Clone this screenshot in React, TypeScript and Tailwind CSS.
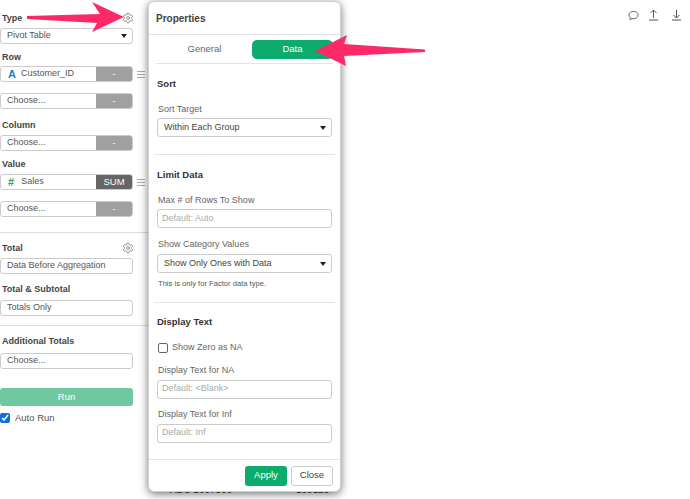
import React from "react";
import { Settings } from "lucide-react";

const Caret = () => (
  <span className="ml-auto w-0 h-0 border-x-[3.5px] border-x-transparent border-t-[4px] border-t-[#222]" />
);

const Label = ({ children, className = "" }: { children: React.ReactNode; className?: string }) => (
  <div className={`text-[9px] leading-[14px] font-bold text-[#444] pl-0.5 ${className}`}>{children}</div>
);

const Box = ({ children, caret }: { children: React.ReactNode; caret?: boolean }) => (
  <div className="h-[16px] w-[133px] flex items-center pl-[6px] pr-[5px] bg-white border border-[#ccc] rounded-[3px] text-[9px] text-[#555]">
    {children}
    {caret && <Caret />}
  </div>
);

const Hamburger = () => (
  <span className="flex flex-col gap-[2px] ml-[4px]">
    <span className="block w-[8px] h-px bg-[#aaa]" />
    <span className="block w-[8px] h-px bg-[#aaa]" />
    <span className="block w-[8px] h-px bg-[#aaa]" />
  </span>
);

const Field = ({
  icon,
  text,
  action = "-",
  dark,
  menu,
}: {
  icon?: React.ReactNode;
  text: string;
  action?: string;
  dark?: boolean;
  menu?: boolean;
}) => (
  <div className="flex items-center">
    <div className="h-[16px] w-[133px] flex bg-white border border-[#ccc] rounded-[3px] overflow-hidden text-[9px] text-[#555]">
      <div className="flex-1 flex items-center pl-[6px]">
        {icon}
        {text}
      </div>
      <div
        className={`w-[36px] flex items-center justify-center text-[9.5px] text-white ${
          dark ? "bg-[#666]" : "bg-[#a0a0a0]"
        }`}
      >
        {action}
      </div>
    </div>
    {menu && <Hamburger />}
  </div>
);

const Sidebar = () => (
  <div className="w-[148px] pt-[11px] flex flex-col">
    <div className="w-[134px] flex items-center justify-between">
      <Label>Type</Label>
      <Settings size={12} strokeWidth={1.2} className="text-[#555]" />
    </div>
    <div className="mt-[3px]">
      <Box caret>Pivot Table</Box>
    </div>
    <Label className="mt-[6px]">Row</Label>
    <div className="mt-[2px]">
      <Field
        icon={<span className="text-[#1b7ed6] font-bold text-[11px] mr-[5px] ml-px">A</span>}
        text="Customer_ID"
        menu
      />
    </div>
    <div className="mt-[11px]">
      <Field text="Choose..." />
    </div>
    <Label className="mt-[9px]">Column</Label>
    <div className="mt-[3px]">
      <Field text="Choose..." />
    </div>
    <Label className="mt-[6px]">Value</Label>
    <div className="mt-[3px]">
      <Field
        icon={<span className="text-[#3aa655] font-bold text-[11px] mr-[7px] ml-px">#</span>}
        text="Sales"
        action="SUM"
        dark
        menu
      />
    </div>
    <div className="mt-[11px]">
      <Field text="Choose..." />
    </div>
    <div className="h-px bg-[#ddd] mt-[15px]" />
    <div className="w-[134px] flex items-center justify-between mt-[8px]">
      <Label>Total</Label>
      <Settings size={12} strokeWidth={1.2} className="text-[#555]" />
    </div>
    <div className="mt-[3px]">
      <Box>Data Before Aggregation</Box>
    </div>
    <Label className="mt-[8px]">Total &amp; Subtotal</Label>
    <div className="mt-[4px]">
      <Box>Totals Only</Box>
    </div>
    <div className="h-px bg-[#ddd] mt-[9px]" />
    <Label className="mt-[8px]">Additional Totals</Label>
    <div className="mt-[5px]">
      <Box>Choose...</Box>
    </div>
    <div className="mt-[19px] h-[18px] w-[133px] bg-[#70c8a1] rounded-[3px] text-white text-[9.5px] flex items-center justify-center">
      Run
    </div>
    <div className="mt-[5px] flex items-center gap-[5px] text-[9.5px] text-[#555]">
      <input type="checkbox" defaultChecked className="w-[10px] h-[10px] m-0 accent-[#0b6fe8]" />
      Auto Run
    </div>
  </div>
);

const PanelLabel = ({ children, className = "mb-[3px]" }: { children: React.ReactNode; className?: string }) => (
  <div className={`text-[9px] leading-[13px] text-[#666] pl-px ${className}`}>{children}</div>
);

const SectionTitle = ({ children }: { children: React.ReactNode }) => (
  <div className="text-[9.5px] leading-[14px] font-bold text-[#333]">{children}</div>
);

const PanelSelect = ({ text }: { text: string }) => (
  <div className="h-[19px] flex items-center pl-[6px] pr-[5px] border border-[#ccc] rounded-[3px] text-[9px] text-[#444]">
    {text}
    <Caret />
  </div>
);

const PanelInput = ({ text }: { text: string }) => (
  <div className="h-[19px] flex items-center pl-[4px] border border-[#ccc] rounded-[3px] text-[9px] text-[#aaa]">
    {text}
  </div>
);

const Divider = () => <div className="h-px bg-[#e5e5e5] -mx-[3px]" />;

const Modal = () => (
  <div className="absolute left-[148px] top-[1px] w-[193px] h-[491px] bg-white rounded-[6px] border border-[#d0d0d0] shadow-[0_2px_8px_rgba(0,0,0,0.55)] flex flex-col">
    <div className="h-[33px] shrink-0 flex items-center pl-[7px] border-b border-[#e5e5e5] text-[10px] font-semibold text-[#444]">
      Properties
    </div>
    <div className="flex-1 px-[8px] flex flex-col">
      <div className="mt-[5px] flex items-center -mr-[1px]">
        <div className="w-[95px] text-center text-[9.5px] text-[#666]">General</div>
        <div className="w-[81px] h-[19px] rounded-[5px] bg-[#0dab6d] text-white text-[9.5px] flex items-center justify-center">
          Data
        </div>
      </div>
      <div className="h-px bg-[#e5e5e5] mt-[4px] -mx-px" />
      <div className="mt-[13px]">
        <SectionTitle>Sort</SectionTitle>
      </div>
      <div className="mt-[12px]">
        <PanelLabel className="mb-[2px]">Sort Target</PanelLabel>
        <PanelSelect text="Within Each Group" />
      </div>
      <div className="mt-[17px]">
        <Divider />
      </div>
      <div className="mt-[13px]">
        <SectionTitle>Limit Data</SectionTitle>
      </div>
      <div className="mt-[12px]">
        <PanelLabel className="mb-[2px]">Max # of Rows To Show</PanelLabel>
        <PanelInput text="Default: Auto" />
      </div>
      <div className="mt-[10px]">
        <PanelLabel>Show Category Values</PanelLabel>
        <PanelSelect text="Show Only Ones with Data" />
      </div>
      <div className="mt-[6px] text-[7.6px] leading-[10px] text-[#555] pl-px">This is only for Factor data type.</div>
      <div className="mt-[13px]">
        <Divider />
      </div>
      <div className="mt-[12px]">
        <SectionTitle>Display Text</SectionTitle>
      </div>
      <div className="mt-[12px] flex items-center gap-[4px] text-[9px] text-[#666]">
        <input type="checkbox" className="w-[10px] h-[10px] m-0 ml-px appearance-none border border-[#666] rounded-[2px]" />
        Show Zero as NA
      </div>
      <div className="mt-[9px]">
        <PanelLabel>Display Text for NA</PanelLabel>
        <PanelInput text="Default: <Blank>" />
      </div>
      <div className="mt-[9px]">
        <PanelLabel>Display Text for Inf</PanelLabel>
        <PanelInput text="Default: Inf" />
      </div>
    </div>
    <div className="h-[32px] shrink-0 border-t border-[#e8e8e8] flex items-center justify-end gap-[4px] pr-[7px]">
      <div className="w-[42px] h-[20px] rounded-[3px] bg-[#0dab6d] text-white text-[9.5px] flex items-center justify-center">
        Apply
      </div>
      <div className="w-[42px] h-[20px] rounded-[3px] border border-[#ccc] text-[#444] text-[9.5px] flex items-center justify-center">
        Close
      </div>
    </div>
  </div>
);

const TopIcons = () => (
  <div className="absolute top-[9px] right-[8px] flex items-center text-[#555]">
    <svg width="11" height="11" viewBox="0 0 12 12" fill="none" stroke="currentColor" strokeWidth="1">
      <path d="M6 1.500c2.800 0 5 1.700 5 4s-2.200 4-5 4c-.6 0-1.200-.1-1.700-.2L2 10.500l.6-2.200C1.600 7.600 1 6.600 1 5.500c0-2.300 2.200-4 5-4z" />
    </svg>
    <svg className="ml-[9px]" width="11" height="12" viewBox="0 0 11 12" fill="none" stroke="currentColor" strokeWidth="1">
      <path d="M5.500 9V1M2.500 4l3-3 3 3M1 11h9" />
    </svg>
    <svg className="ml-[12px]" width="11" height="12" viewBox="0 0 11 12" fill="none" stroke="currentColor" strokeWidth="1">
      <path d="M5.500 1v8M2.500 6l3 3 3-3M1 11h9" />
    </svg>
  </div>
);

const Arrows = () => (
  <>
    <svg className="absolute left-0 top-0" width="130" height="36" viewBox="0 0 130 36">
      <path d="M27 16 L100 14 L92 2 L124 17 L92 32 L97 23 L27 19 Z" fill="#fb2a66" />
    </svg>
    <svg className="absolute left-[310px] top-[30px]" width="120" height="40" viewBox="310 30 120 40">
      <path d="M315 51 L347 35 L344 44 L425 49.500 L425 52 L344 56 L346 66 Z" fill="#fb2a66" />
    </svg>
  </>
);

export default function App() {
  return (
    <div className="relative w-[690px] h-[499px] bg-white overflow-hidden font-['Liberation_Sans',sans-serif]">
      <Sidebar />
      <TopIcons />
      {/* table rows behind the dialog, only their lower edge shows */}
      <div className="absolute left-[170px] top-[485px] text-[10px] leading-[10px] font-medium text-[#333]">ABC 1007890</div>
      <div className="absolute left-[296px] top-[485px] text-[10px] leading-[10px] text-[#333]">105125</div>
      <Modal />
      <Arrows />
    </div>
  );
}
